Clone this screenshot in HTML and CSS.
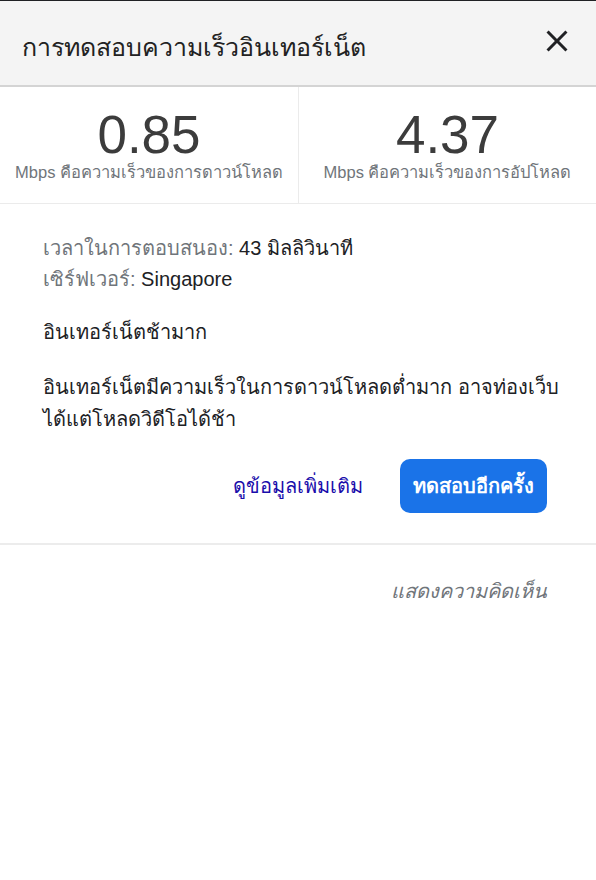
FILE: index.html
```html
<!DOCTYPE html>
<html lang="th">
<head>
  <meta charset="UTF-8">
  <meta name="viewport" content="width=device-width, initial-scale=1.0">
  <title>การทดสอบความเร็วอินเทอร์เน็ต</title>
  <link rel="stylesheet" href="styles.css">
</head>
<body>
  <div class="dialog">
    <div class="header">
      <h1 class="title">การทดสอบความเร็วอินเทอร์เน็ต</h1>
      <button class="close" type="button" aria-label="ปิด">
        <svg viewBox="0 0 24 24" width="24" height="24">
          <path d="M19 6.41 17.59 5 12 10.59 6.41 5 5 6.41 10.59 12 5 17.59 6.41 19 12 13.41 17.59 19 19 17.59 13.41 12z" fill="#202124"/>
        </svg>
      </button>
    </div>

    <div class="stats">
      <div class="stat">
        <div class="value">0.85</div>
        <div class="unit">Mbps คือความเร็วของการดาวน์โหลด</div>
      </div>
      <div class="stat">
        <div class="value">4.37</div>
        <div class="unit">Mbps คือความเร็วของการอัปโหลด</div>
      </div>
    </div>

    <div class="details">
      <div class="meta">
        <div><span class="key">เวลาในการตอบสนอง:</span> 43 มิลลิวินาที</div>
        <div><span class="key">เซิร์ฟเวอร์:</span> Singapore</div>
      </div>
      <p class="verdict">อินเทอร์เน็ตช้ามาก</p>
      <p class="summary">อินเทอร์เน็ตมีความเร็วในการดาวน์โหลดต่ำมาก อาจท่องเว็บได้แต่โหลดวิดีโอได้ช้า</p>
      <div class="actions">
        <a class="more" href="#">ดูข้อมูลเพิ่มเติม</a>
        <button class="retry" type="button">ทดสอบอีกครั้ง</button>
      </div>
    </div>

    <div class="feedback">
      <a href="#">แสดงความคิดเห็น</a>
    </div>
  </div>
</body>
</html>
```

FILE: styles.css
```css
body {
  margin: 0;
  font-family: "Liberation Sans", Arial, sans-serif;
  color: #202124;
  background: #fff;
}
.dialog {
  border-top: 1px solid #202124;
}
.header {
  height: 84px;
  display: flex;
  align-items: center;
  justify-content: space-between;
  padding: 0 22px;
  background-color: #f4f4f4;
  border-bottom: 2px solid #d4d4d4;
}
.title {
  margin: 7px 0 0;
  font-size: 25px;
  font-weight: normal;
  color: #222;
}
.close {
  width: 36px;
  height: 36px;
  padding: 0;
  margin: -4px -1px 0 0;
  border: none;
  background: none;
  display: flex;
  align-items: center;
  justify-content: center;
  cursor: pointer;
}
.close svg {
  width: 36px;
  height: 36px;
}
.stats {
  display: grid;
  grid-template-columns: 1fr 1fr;
  border-bottom: 1px solid #ebebeb;
}
.stat {
  text-align: center;
  padding: 20px 0 22px;
}
.stat + .stat {
  border-left: 1px solid #ebebeb;
}
.value {
  font-size: 53px;
  line-height: 56px;
  color: #3c3c3c;
}
.unit {
  font-size: 16.5px;
  line-height: 18px;
  color: #70757a;
}
.details {
  padding: 29px 49px 30px 43px;
  border-bottom: 2px solid #ececec;
  font-size: 20px;
  line-height: 31px;
}
.key {
  color: #70757a;
}
.verdict,
.summary {
  margin: 22px 0 0;
}
.summary {
  margin: 23px -14px 0 0;
  line-height: 32px;
}
.actions {
  display: flex;
  justify-content: flex-end;
  align-items: center;
  gap: 37px;
  margin-top: 24px;
}
.more {
  color: #1a0dab;
  text-decoration: none;
}
.retry {
  height: 54px;
  padding: 0 13px;
  border: none;
  border-radius: 10px;
  background-color: #1a73e8;
  color: #fff;
  font-family: inherit;
  font-size: 20px;
  font-weight: bold;
  cursor: pointer;
}
.feedback {
  text-align: right;
  padding: 34px 49px;
  line-height: 24px;
}
.feedback a {
  font-size: 20px;
  font-style: italic;
  color: #70757a;
  text-decoration: none;
}
```
